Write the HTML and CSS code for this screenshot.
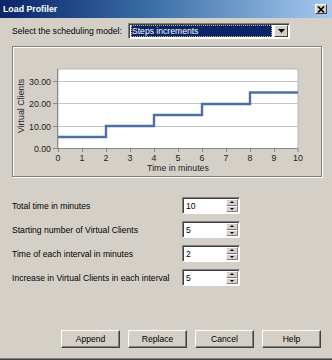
FILE: index.html
```html
<!DOCTYPE html>
<html>
<head>
<meta charset="utf-8">
<link rel="stylesheet" href="styles.css">
</head>
<body>
<div class="window">
  <div class="titlebar">
    <span class="title">Load Profiler</span>
    <span class="close"><svg width="8" height="7" viewBox="0 0 8 7"><path d="M1 0.5 L7 6.5 M7 0.5 L1 6.5" stroke="#000" stroke-width="1.6"/></svg></span>
  </div>
  <div class="select-row">
    <span class="label select-label">Select the scheduling model:</span>
    <div class="dropdown">
      <div class="dd-value"><span>Steps increments</span></div>
      <div class="dd-btn"><svg width="7" height="4" viewBox="0 0 7 4"><path d="M0 0 H7 L3.5 4 Z" fill="#000"/></svg></div>
    </div>
  </div>
  <div class="groupbox">
    <svg class="chart" width="308" height="129" viewBox="13 47 308 129">
      <rect x="58" y="69" width="240" height="79.5" fill="#fff" stroke="#b8b8b8" stroke-width="1"/>
      <g stroke="#c4c4c4" stroke-width="1">
        <line x1="58" y1="81.5" x2="298" y2="81.5"/>
        <line x1="58" y1="103.5" x2="298" y2="103.5"/>
        <line x1="58" y1="126.5" x2="298" y2="126.5"/>
      </g>
      <g stroke="#8a8a8a" stroke-width="1">
        <line x1="57.5" y1="69" x2="57.5" y2="149"/>
        <line x1="57.5" y1="148.5" x2="298" y2="148.5"/>
        <line x1="53" y1="81.5" x2="58" y2="81.5"/>
        <line x1="53" y1="103.5" x2="58" y2="103.5"/>
        <line x1="53" y1="126.5" x2="58" y2="126.5"/>
        <line x1="53" y1="148.5" x2="58" y2="148.5"/>
        <line x1="58.5" y1="148" x2="58.5" y2="152"/>
        <line x1="82.5" y1="148" x2="82.5" y2="152"/>
        <line x1="106.5" y1="148" x2="106.5" y2="152"/>
        <line x1="130.5" y1="148" x2="130.5" y2="152"/>
        <line x1="154.5" y1="148" x2="154.5" y2="152"/>
        <line x1="178.5" y1="148" x2="178.5" y2="152"/>
        <line x1="202.5" y1="148" x2="202.5" y2="152"/>
        <line x1="226.5" y1="148" x2="226.5" y2="152"/>
        <line x1="250.5" y1="148" x2="250.5" y2="152"/>
        <line x1="274.5" y1="148" x2="274.5" y2="152"/>
        <line x1="298" y1="148" x2="298" y2="152"/>
      </g>
      <path d="M58 137 H106 V126 H154 V115 H202 V104 H250 V92.5 H298" fill="none" stroke="#4e6fa6" stroke-width="2.4"/>
      <g class="ytext" text-anchor="end">
        <text x="51" y="84.5">30.00</text>
        <text x="51" y="106.5">20.00</text>
        <text x="51" y="129.5">10.00</text>
        <text x="51" y="151.5">0.00</text>
      </g>
      <g class="xtext" text-anchor="middle">
        <text x="58" y="161">0</text>
        <text x="82" y="161">1</text>
        <text x="106" y="161">2</text>
        <text x="130" y="161">3</text>
        <text x="154" y="161">4</text>
        <text x="178" y="161">5</text>
        <text x="202" y="161">6</text>
        <text x="226" y="161">7</text>
        <text x="250" y="161">8</text>
        <text x="274" y="161">9</text>
        <text x="298" y="161">10</text>
      </g>
      <text class="xtext" x="178" y="171" text-anchor="middle">Time in minutes</text>
      <text class="xtext" x="0" y="0" text-anchor="middle" transform="translate(24 106) rotate(-90)">Virtual Clients</text>
    </svg>
  </div>
  <div class="fields">
    <span class="label">Total time in minutes</span>
    <div class="spin"><span class="spin-val">10</span><span class="spin-btns"><span class="sb"><i class="up"></i></span><span class="sb"><i class="down"></i></span></span></div>
    <span class="label">Starting number of Virtual Clients</span>
    <div class="spin"><span class="spin-val">5</span><span class="spin-btns"><span class="sb"><i class="up"></i></span><span class="sb"><i class="down"></i></span></span></div>
    <span class="label">Time of each interval in minutes</span>
    <div class="spin"><span class="spin-val">2</span><span class="spin-btns"><span class="sb"><i class="up"></i></span><span class="sb"><i class="down"></i></span></span></div>
    <span class="label">Increase in Virtual Clients in each interval</span>
    <div class="spin"><span class="spin-val">5</span><span class="spin-btns"><span class="sb"><i class="up"></i></span><span class="sb"><i class="down"></i></span></span></div>
  </div>
  <div class="buttons">
    <button class="btn">Append</button>
    <button class="btn">Replace</button>
    <button class="btn">Cancel</button>
    <button class="btn">Help</button>
  </div>
</div>
</body>
</html>
```
FILE: styles.css
```css
* { box-sizing: border-box; }
html, body { margin: 0; padding: 0; }
body {
  width: 332px;
  height: 360px;
  background: #d4d0c8;
  font-family: "Liberation Sans", Arial, sans-serif;
  font-size: 8.6px;
  color: #000;
  overflow: hidden;
}
.window {
  width: 332px;
  height: 359px;
  background: #d4d0c8;
  border-bottom: 1px solid #808080;
  box-shadow: 0 1px 0 #404040;
}
.titlebar {
  height: 18px;
  background: linear-gradient(to right, #0a246a 0%, #3a6ea5 45%, #a6caf0 100%);
  display: flex;
  align-items: center;
  justify-content: space-between;
  padding: 0 5px 0 3px;
}
.title {
  color: #fff;
  font-weight: bold;
  font-size: 8.8px;
}
.close {
  width: 12px;
  height: 10px;
  background: #d4d0c8;
  border-top: 1px solid #fff;
  border-left: 1px solid #fff;
  border-right: 1px solid #404040;
  border-bottom: 1px solid #404040;
  display: flex;
  align-items: center;
  justify-content: center;
}
.select-row {
  display: flex;
  align-items: center;
  margin-top: 5px;
  height: 16px;
}
.select-label {
  width: 128px;
  padding-left: 12px;
}
.dropdown {
  width: 162px;
  height: 16px;
  display: flex;
  background: #fff;
  border-top: 1px solid #808080;
  border-left: 1px solid #808080;
  border-right: 1px solid #fff;
  border-bottom: 1px solid #fff;
  box-shadow: inset 1px 1px 0 #404040;
  padding: 2px 1px 1px 2px;
}
.dd-value {
  flex: 1;
  background: #0a246a;
  color: #fff;
  outline: 1px dotted #c8b878;
  outline-offset: -1px;
  display: flex;
  align-items: center;
  padding-left: 1px;
  margin-top: -1px;
  margin-right: 2px;
}
.dd-btn {
  width: 14px;
  margin-top: -1px;
  background: #d4d0c8;
  border-top: 1px solid #fff;
  border-left: 1px solid #fff;
  border-right: 1px solid #404040;
  border-bottom: 1px solid #404040;
  display: flex;
  align-items: center;
  justify-content: center;
}
.groupbox {
  margin: 7px 0 0 12px;
  width: 310px;
  height: 131px;
  border: 1px solid #808080;
  box-shadow: 1px 1px 0 #fff, inset 1px 1px 0 #fff;
}
.chart { display: block; }
.ytext text, .xtext, .xtext text {
  font-family: "Liberation Sans", Arial, sans-serif;
  font-size: 8.8px;
  fill: #222;
}
.fields {
  display: grid;
  grid-template-columns: 170px 58px;
  grid-auto-rows: 17px;
  row-gap: 7px;
  align-items: center;
  margin-top: 20px;
  padding-left: 12px;
}
.spin {
  height: 17px;
  display: flex;
  background: #fff;
  border-top: 1px solid #808080;
  border-left: 1px solid #808080;
  border-right: 1px solid #fff;
  border-bottom: 1px solid #fff;
  box-shadow: inset 1px 1px 0 #404040;
  padding: 1px 1px 1px 2px;
}
.spin-val {
  flex: 1;
  display: flex;
  align-items: center;
  padding-left: 1px;
}
.spin-btns {
  width: 12px;
  display: flex;
  flex-direction: column;
}
.sb {
  flex: 1;
  background: #d4d0c8;
  border-top: 1px solid #fff;
  border-left: 1px solid #fff;
  border-right: 1px solid #808080;
  border-bottom: 1px solid #808080;
  display: flex;
  align-items: center;
  justify-content: center;
}
.sb i {
  width: 0;
  height: 0;
  border-left: 2px solid transparent;
  border-right: 2px solid transparent;
}
.sb .up { border-bottom: 2px solid #000; }
.sb .down { border-top: 2px solid #000; }
.buttons {
  display: flex;
  gap: 8px;
  margin-top: 44px;
  padding-left: 61px;
}
.btn {
  width: 59px;
  height: 18px;
  padding: 0;
  font-family: "Liberation Sans", Arial, sans-serif;
  font-size: 8.6px;
  color: #000;
  background: #d4d0c8;
  border-top: 1px solid #fff;
  border-left: 1px solid #fff;
  border-right: 1px solid #404040;
  border-bottom: 1px solid #404040;
  box-shadow: inset -1px -1px 0 #808080;
  border-radius: 0;
}
```
